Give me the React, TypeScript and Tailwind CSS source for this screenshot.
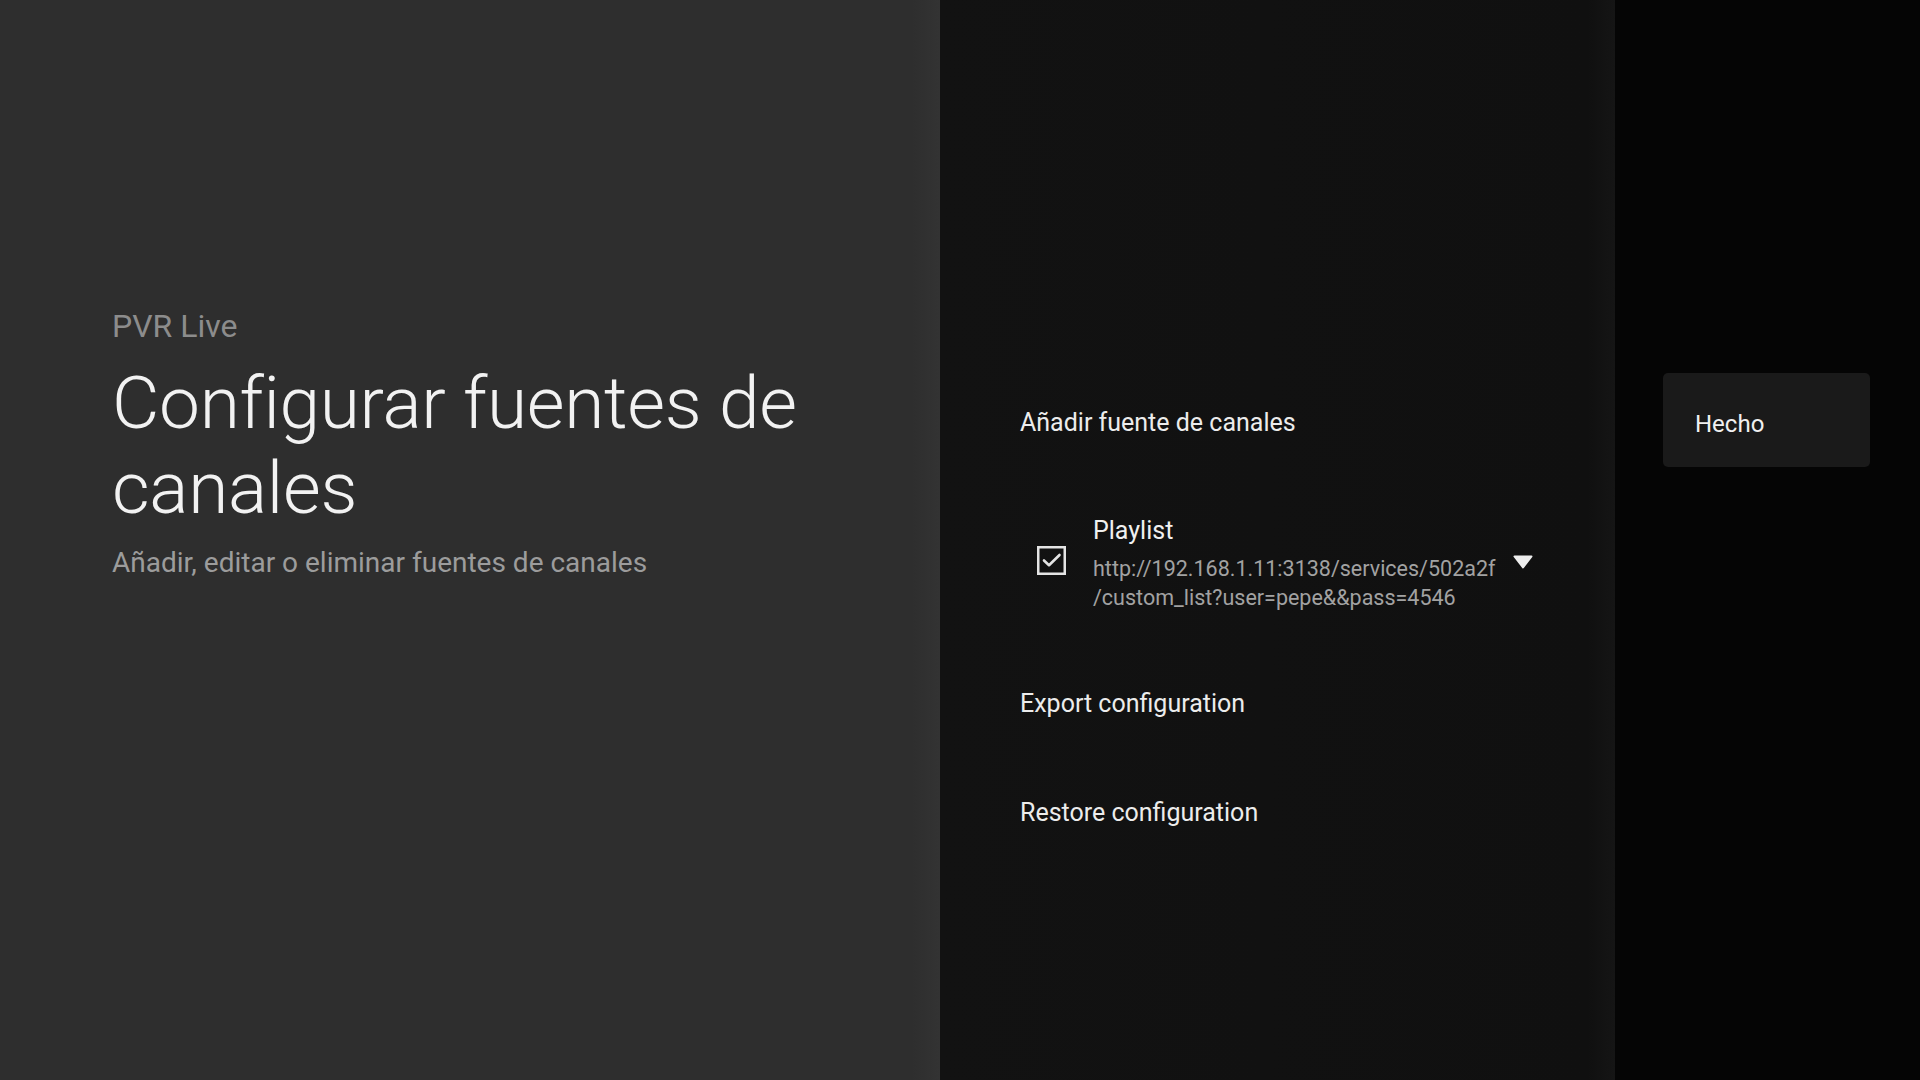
import React from 'react'

const font = { fontFamily: 'Roboto, "Noto Sans", sans-serif' }

function CheckBox() {
  return (
    <svg width="29" height="29" viewBox="0 0 29 29" className="shrink-0">
      <rect x="1.25" y="1.25" width="26.5" height="26.5" fill="none" stroke="#e4e4e4" strokeWidth="2.5" />
      <path d="M7 14.5 L12 19.2 L22.5 9" fill="none" stroke="#e4e4e4" strokeWidth="2.6" strokeLinecap="round" strokeLinejoin="round" />
    </svg>
  )
}

function Caret() {
  return (
    <svg width="20" height="14" viewBox="0 0 20 14" className="shrink-0">
      <path d="M1.5 1.5 L18.5 1.5 L10 12.5 Z" fill="#ededed" stroke="#ededed" strokeWidth="2" strokeLinejoin="round" />
    </svg>
  )
}

export default function App() {
  return (
    <div className="flex h-[1080px] w-[1920px] overflow-hidden bg-[#050505]" style={font}>
      {/* panel de título */}
      <div className="flex w-[940px] shrink-0 flex-col bg-[linear-gradient(90deg,#2e2e2e_0%,#2e2e2e_97%,#333333_100%)] pl-[112px] pt-[306px]">
        <p className="text-[32px] leading-[40px] text-[#8c8c8c]">PVR Live</p>
        <h1 className="mt-[15px] w-[780px] text-[73px] font-light leading-[85px] tracking-[-0.3px] text-[#f2f2f2]">
          Configurar fuentes de canales
        </h1>
        <p className="mt-[16px] text-[28px] leading-[32px] text-[#9c9c9c]">
          Añadir, editar o eliminar fuentes de canales
        </p>
      </div>

      {/* lista de acciones */}
      <div className="flex w-[675px] shrink-0 flex-col gap-[76px] bg-[linear-gradient(90deg,#121212_0%,#101010_96%,#151515_100%)] pl-[80px] pt-[407px]">
        <p className="text-[25px] leading-[32px] text-[#ececec]">Añadir fuente de canales</p>

        <div className="flex items-center">
          <div className="ml-[17px] mt-[-6px]">
            <CheckBox />
          </div>
          <div className="ml-[27px] w-[410px]">
            <p className="text-[25px] leading-[32px] text-[#f0f0f0]">Playlist</p>
            <p className="mt-[7px] text-[21.5px] leading-[29px] text-[#a2a2a2]">
              <span className="block">http://192.168.1.11:3138/services/502a2f</span>
              <span className="block">/custom_list?user=pepe&amp;&amp;pass=4546</span>
            </p>
          </div>
          <div className="ml-[10px] mt-[-4px]">
            <Caret />
          </div>
        </div>

        <p className="text-[25px] leading-[32px] text-[#ececec]">Export configuration</p>
        <p className="mt-[1px] text-[25px] leading-[32px] text-[#ececec]">Restore configuration</p>
      </div>

      {/* acción principal */}
      <div className="flex-1 pl-[48px] pt-[373px]">
        <div className="h-[94px] w-[207px] rounded-[5px] bg-[#1a1a1a] pl-[32px] pt-[35px]">
          <span className="block text-[24px] leading-[32px] text-[#f0f0f0]">Hecho</span>
        </div>
      </div>
    </div>
  )
}
